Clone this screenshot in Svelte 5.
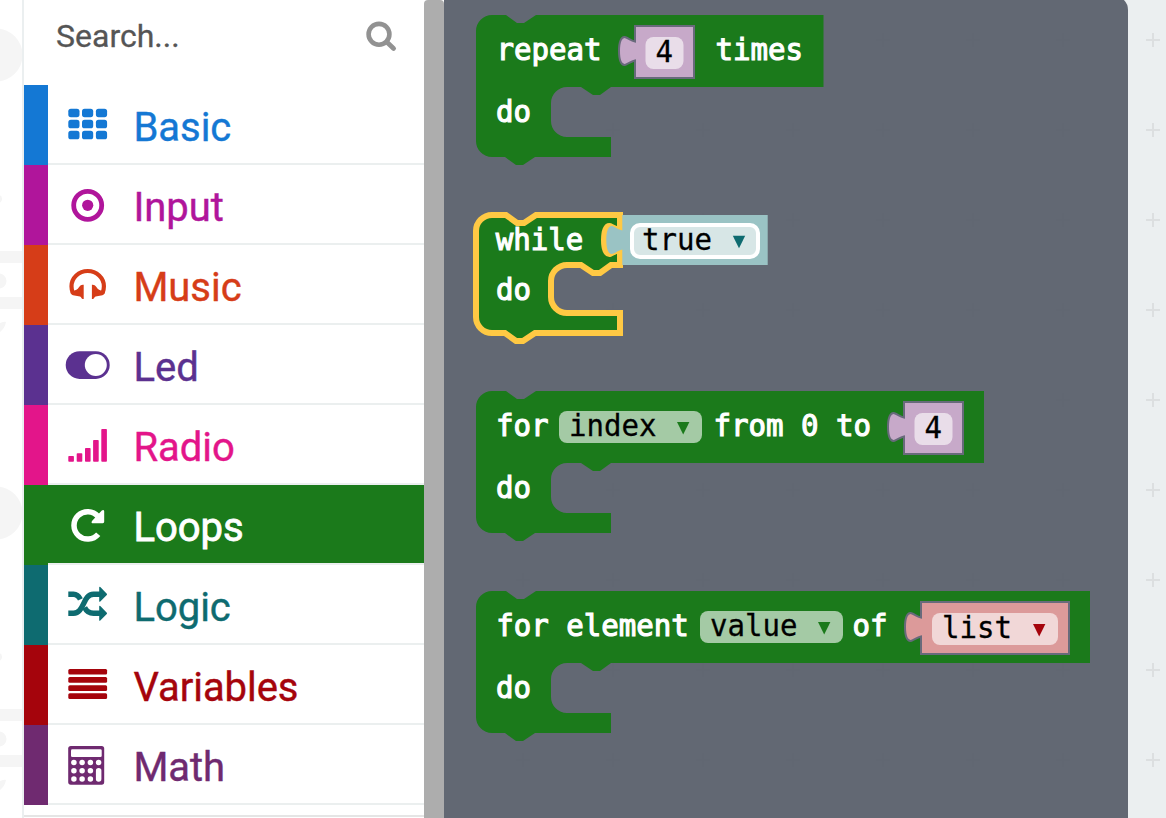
<script>
  const categories = [
    { name: 'Basic', color: '#1478d4' },
    { name: 'Input', color: '#b0159b' },
    { name: 'Music', color: '#d63d18' },
    { name: 'Led', color: '#5b3190' },
    { name: 'Radio', color: '#e3158a' },
    { name: 'Loops', color: '#1b7a1b' },
    { name: 'Logic', color: '#0e6b70' },
    { name: 'Variables', color: '#a5040c' },
    { name: 'Math', color: '#6f2a70' }
  ];
  let selected = $state('Loops');

  // Advance of one monospaced character inside a block
  const CH = 17.5;

  // Side connector, drawn downwards from the top of a value block
  const TAB =
    'v15.5 c-3 -0.5 -6 -3 -9.5 -4.3 c-4.5 -1 -6.5 5 -6.5 13.8 c0 8.8 2 14.8 6.5 13.8 c3.5 -1.3 6.5 -3.8 9.5 -4.3';

  const loopBlocks = [
    {
      width: 347.5, header: 72, arm: 122, height: 142, foot: 135,
      labels: [
        { t: 'repeat', x: 20.5, y: 45 },
        { t: 'times', x: 239.5, y: 45 },
        { t: 'do', x: 20, y: 107 }
      ],
      fields: [],
      value: { x: 159, w: 59, fx: 169.5, fw: 38, t: '4', tx: 179.5, fill: '#c7a9c9', field: '#e9dde9' }
    },
    {
      width: 144, header: 50, arm: 98, height: 118, foot: 144, active: true,
      labels: [
        { t: 'while', x: 19.8, y: 35 },
        { t: 'do', x: 20, y: 85 }
      ],
      fields: []
    },
    {
      width: 508, header: 72, arm: 122, height: 142, foot: 135,
      labels: [
        { t: 'for', x: 20, y: 45 },
        { t: 'from 0 to', x: 237.5, y: 45 },
        { t: 'do', x: 20, y: 107 }
      ],
      fields: [{ x: 83, w: 143, t: 'index', tx: 93, ax: 201 }],
      value: { x: 428, w: 59, fx: 438.5, fw: 38, t: '4', tx: 448.5, fill: '#c7a9c9', field: '#e9dde9' }
    },
    {
      width: 614, header: 72, arm: 122, height: 142, foot: 135,
      labels: [
        { t: 'for element', x: 20.3, y: 45 },
        { t: 'of', x: 376.5, y: 45 },
        { t: 'do', x: 20, y: 107 }
      ],
      fields: [{ x: 224, w: 143, t: 'value', tx: 234, ax: 342 }],
      value: { x: 445, w: 148, fx: 456, fw: 126, t: 'list', tx: 466, fill: '#dc9a9a', field: '#f1d7d7', ax: 557, arrow: '#a5040c' }
    }
  ];

  const outline = (b) =>
    `M0 16 A16 16 0 0 1 16 0 H30 L41 8 H48 L60 0 H${b.width}` +
    (b.active ? ` ${TAB}` : '') +
    ` V${b.header} H135 L124 ${b.header + 8} H117 L105 ${b.header} H91` +
    ` A16 16 0 0 0 75 ${b.header + 16} V${b.arm - 16} A16 16 0 0 0 91 ${b.arm}` +
    ` H${b.foot} V${b.height} H59 L47 ${b.height + 8} H40 L29 ${b.height} H16` +
    ` A16 16 0 0 1 0 ${b.height - 16} Z`;

  const plug = (x, y, w, h) => `M${x} ${y} ${TAB} V${y + h} h${w} V${y} Z`;
</script>

{#snippet icon(name)}
  <svg class="icon" width="48" height="80" viewBox="0 0 48 80" fill="currentColor" aria-hidden="true">
    {#if name === 'Basic'}
      {#each [23.7, 34.8, 45.8] as y}
        {#each [4.3, 18, 31.9] as x}
          <rect {x} {y} width="11.2" height="8.5" rx="2.6" />
        {/each}
      {/each}
    {:else if name === 'Input'}
      <circle cx="23.7" cy="40.3" r="14" fill="none" stroke="currentColor" stroke-width="4.8" />
      <circle cx="23.7" cy="40.3" r="5.6" />
    {:else if name === 'Music'}
      <path d="M8.8 48 C7.7 45.5 7.5 43.5 7.5 41.3 A16.2 15.3 0 0 1 39.9 41.3 C39.9 43.5 39.7 45.5 38.6 48" fill="none" stroke="currentColor" stroke-width="4.2" />
      <path d="M19.7 39.8 V54 H18.6 C17.3 54 17.3 52 16 51.6 L9 50.2 C7.4 49.8 6.8 48.4 6.6 46.4 L10.5 45.6 C13.5 45 14.5 42.5 16 41 C17 39.8 18.5 39.8 19.7 39.8Z" />
      <path d="M27.9 39.8 V54 H29 C30.3 54 30.3 52 31.6 51.6 L38.4 50.2 C40 49.8 40.6 48.4 40.8 46.4 L36.9 45.6 C34 45 33 42.5 31.5 41 C30.5 39.8 29 39.8 27.9 39.8Z" />
    {:else if name === 'Led'}
      <rect x="1.7" y="26.2" width="44" height="27.7" rx="13.85" />
      <circle cx="31.8" cy="40" r="11" fill="#fff" />
    {:else if name === 'Radio'}
      {#each [[4.3, 51], [12.7, 48.3], [21, 43], [29.1, 35], [37.3, 24]] as [x, y]}
        <rect {x} {y} width="5.6" height={56.7 - y} rx="0.8" />
      {/each}
    {:else if name === 'Loops'}
      <path d="M34 31.4 A13.7 13.7 0 1 0 34.2 49.2" fill="none" stroke="currentColor" stroke-width="5.5" />
      <path d="M40.2 26.2 V36.8 Q40.2 38.2 38.8 38.2 H28.2 Q26.6 37.2 28.2 35.7 L37.8 25.6 Q39.8 24.4 40.2 26.2Z" />
    {:else if name === 'Logic'}
      <g fill="none" stroke="currentColor" stroke-width="5.4">
        <path d="M4.3 48.3 H9.5 C20.5 48.3 18.5 29.3 29.5 29.3 H36" />
        <path d="M4.3 29.3 H9.5 C13 29.3 14.8 31.2 16.4 34.4" />
        <path d="M20.6 42.5 C22.6 46.5 25 48.3 29.5 48.3 H36" />
      </g>
      <path d="M35.2 22.3 Q35.4 21.3 36.3 22 L42.8 28.7 Q43.3 29.3 42.8 29.9 L36.3 36.6 Q35.4 37.2 35.2 36.3Z M35.2 41.3 Q35.4 40.3 36.3 41 L42.8 47.7 Q43.3 48.3 42.8 48.9 L36.3 55.6 Q35.4 56.2 35.2 55.3Z" />
    {:else if name === 'Variables'}
      {#each [23.9, 32, 40.2, 48.3] as y}
        <rect x="4.3" {y} width="38.8" height="5.7" rx="1.5" />
      {/each}
    {:else}
      <rect x="4.2" y="21" width="36" height="38.7" rx="2.6" />
      <g fill="#fff">
        <rect x="7" y="24.2" width="30.7" height="7.9" rx="1.3" />
        {#each [37.4, 45.7, 54] as cy, r}
          {#each [9.9, 18.1, 26.4, 34.6] as cx, c}
            {#if c < 3 || r === 0}<circle {cx} {cy} r="2.75" />{/if}
          {/each}
        {/each}
        <rect x="31.9" y="43" width="5.5" height="13.8" rx="2.7" />
      </g>
    {/if}
  </svg>
{/snippet}

{#snippet code(t, x, y, cls)}
  <text class={cls} {x} {y} textLength={t.length * CH} lengthAdjust="spacingAndGlyphs" xml:space="preserve">{t}</text>
{/snippet}

{#snippet arrow(x, y, color)}
  <path d="M{x} {y} h12.4 l-6.2 12.4z" fill={color} />
{/snippet}

<div class="editor">
  <div class="simulator">
    <svg width="22" height="818" fill="#f5f5f5" aria-hidden="true">
      {#each [0, 458] as dy}
        <g transform="translate(0 {dy})">
          <circle cx="-4" cy="55" r="26.5" />
          <circle cx="-2" cy="199" r="4" />
          <rect y="251" width="22" height="12" />
          <rect y="297" width="22" height="12" />
          <circle cx="-1" cy="281" r="7.5" />
          <path d="M0 323 Q5 321 6 322 Q5 328 0 332Z" />
        </g>
      {/each}
    </svg>
  </div>

  <nav class="toolbox">
    <div class="search">
      <span>Search...</span>
      <svg width="34" height="34" viewBox="0 0 34 34" fill="none" stroke="#929292" aria-hidden="true">
        <circle cx="15" cy="15.3" r="10.4" stroke-width="4.6" />
        <path d="M22.8 23 L29.6 29.4" stroke-width="4.8" stroke-linecap="round" />
      </svg>
    </div>
    {#each categories as c}
      <button
        class="category"
        class:selected={selected === c.name}
        style="--c: {c.color}"
        onclick={() => (selected = c.name)}
      >
        <span class="body">
          {@render icon(c.name)}
          <span class="name">{c.name}</span>
        </span>
      </button>
    {/each}
    <div class="divider"></div>
  </nav>

  <div class="scrollbar"></div>

  <div class="canvas">
    <div class="flyout">
      {#each loopBlocks as b}
        <svg class="block" width="620" height={b.height} viewBox="0 0 620 {b.height}">
          <path d={outline(b)} fill="#1b7a1b" />
          {#if b.active}
            <path d={outline(b)} fill="none" stroke="#ffc944" stroke-width="6" />
            <path d={plug(146.3, 0, 145.4, 50)} fill="#9ac3c4" />
            <rect x="156" y="10" width="126" height="32" rx="8" fill="#d7e6e6" stroke="#fff" stroke-width="4" />
            {@render code('true', 166, 35, 'dark')}
            {@render arrow(256.8, 20.8, '#0e6b70')}
          {/if}
          {#each b.fields as f}
            <rect x={f.x} y="20" width={f.w} height="32" rx="8" fill="#a4caa5" />
            {@render code(f.t, f.tx, 45, 'dark')}
            {@render arrow(f.ax, 31, '#1b7a1b')}
          {/each}
          {#if b.value}
            <path d={plug(b.value.x, 11, b.value.w, 52)} fill={b.value.fill} stroke="#686a7b" stroke-width="2" />
            <rect x={b.value.fx} y="22" width={b.value.fw} height="32" rx="8" fill={b.value.field} />
            {@render code(b.value.t, b.value.tx, 47, 'dark')}
            {#if b.value.ax}{@render arrow(b.value.ax, 33, b.value.arrow)}{/if}
          {/if}
          {#each b.labels as l}
            {@render code(l.t, l.x, l.y, 'light')}
          {/each}
        </svg>
      {/each}
    </div>
  </div>
</div>

<style>
  :global(body) {
    margin: 0;
    overflow: hidden;
  }
  .editor {
    display: flex;
    width: 1166px;
    height: 818px;
    overflow: hidden;
    background: #fff;
    font-family: Roboto, sans-serif;
  }
  .simulator {
    flex: none;
    width: 22px;
    border-right: 2px solid #ebeff0;
  }
  .simulator svg {
    display: block;
  }
  .toolbox {
    flex: none;
    width: 400px;
    display: flex;
    flex-direction: column;
  }
  .search {
    box-sizing: border-box;
    height: 85px;
    padding: 17px 26px 0 32px;
    display: flex;
    justify-content: space-between;
    align-items: flex-start;
    color: #555;
    font-size: 32px;
    line-height: 38px;
    -webkit-text-stroke: 0.3px;
  }
  .search svg {
    margin-top: 2px;
  }
  .category {
    flex: none;
    box-sizing: border-box;
    height: 80px;
    margin: 0;
    padding: 0;
    border: 0;
    border-left: 24px solid var(--c);
    display: flex;
    background: none;
    color: var(--c);
    font: 400 40px/80px Roboto, sans-serif;
    text-align: left;
  }
  .body {
    box-sizing: border-box;
    width: 376px;
    height: 80px;
    padding-left: 16px;
    border-bottom: 2px solid #ebefef;
    display: flex;
    overflow: hidden;
  }
  .selected .body {
    background: var(--c);
    background-clip: padding-box;
    color: #fff;
  }
  .selected .name {
    -webkit-text-stroke: 0.8px;
  }
  .icon {
    flex: none;
  }
  .name {
    margin: 3px 0 0 21.5px;
    letter-spacing: -0.05px;
    -webkit-text-stroke: 0.4px;
  }
  .divider {
    margin-top: 10px;
    border-top: 2px solid #e5e5e5;
  }
  .scrollbar {
    flex: none;
    width: 20px;
    border-radius: 4px 4px 0 0;
    background: #adadad;
  }
  .canvas {
    flex: 1;
    background: #ebeff0
      url("data:image/svg+xml,%3Csvg xmlns='http://www.w3.org/2000/svg' width='90' height='90'%3E%3Cpath d='M38 45h14M45 38v14' stroke='%23dcdfe0' stroke-width='2'/%3E%3C/svg%3E")
      34px -5px;
  }
  .flyout {
    box-sizing: border-box;
    width: 684px;
    height: 836px;
    margin-top: -4px;
    padding: 19px 0 0 32px;
    border-radius: 0 14px 0 0;
    display: flex;
    flex-direction: column;
    gap: 58px;
    background: #626873
      url("data:image/svg+xml,%3Csvg xmlns='http://www.w3.org/2000/svg' width='90' height='90'%3E%3Cpath d='M38 45h14M45 38v14' stroke='%23616772' stroke-width='2'/%3E%3C/svg%3E")
      34px -1px;
  }
  .block {
    flex: none;
    overflow: visible;
  }
  text {
    font-family: 'DejaVu Sans Mono', monospace;
    font-size: 31px;
    white-space: pre;
  }
  .light {
    fill: #fff;
    stroke: #fff;
    stroke-width: 1.2;
  }
  .dark {
    fill: #000;
    stroke: #000;
    stroke-width: 0.3;
  }
</style>
